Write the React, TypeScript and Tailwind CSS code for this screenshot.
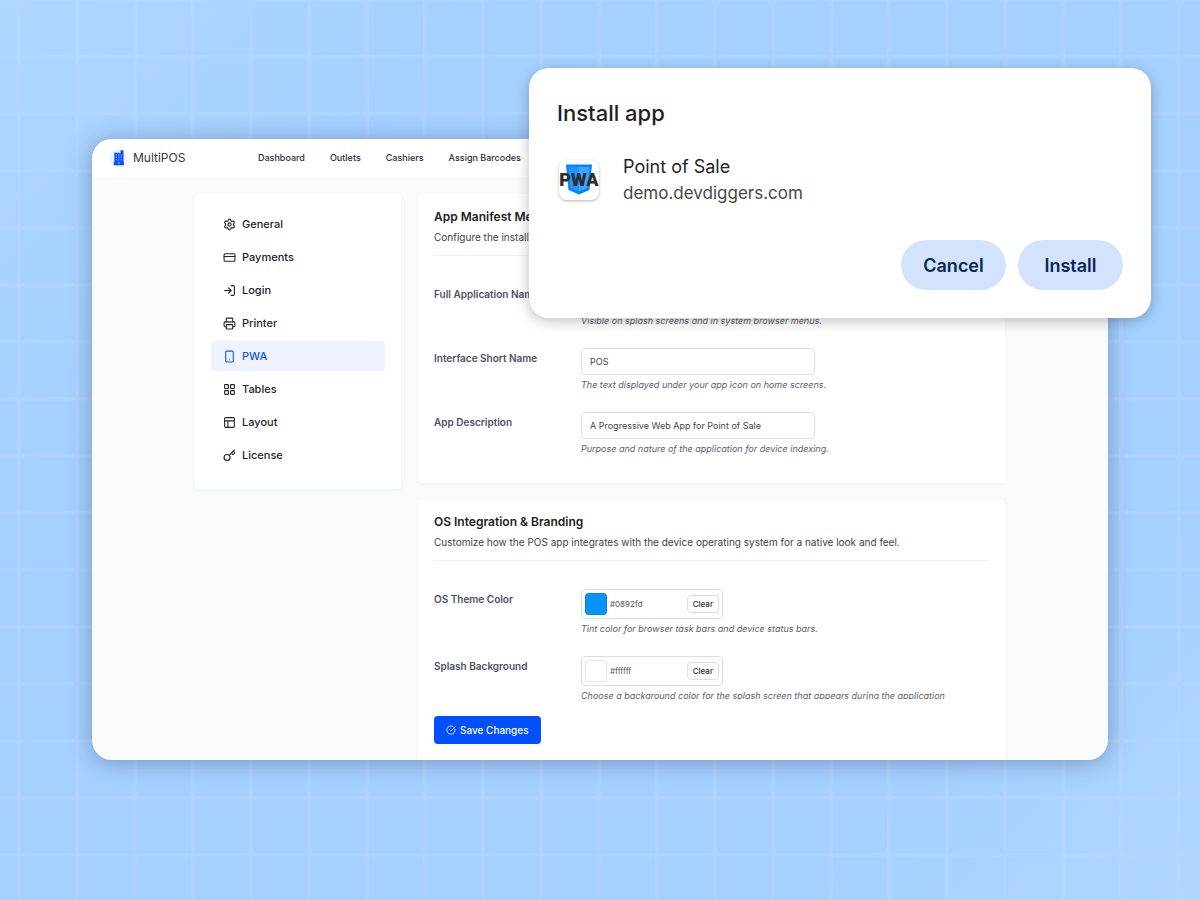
import { useState } from "react";
import {
    CircleCheckBig,
    CreditCard,
    Key,
    LayoutGrid,
    LogIn,
    PanelsTopLeft,
    Printer,
    Settings,
    Smartphone,
    type LucideIcon,
} from "lucide-react";

const navLinks = ["Dashboard", "Outlets", "Cashiers", "Assign Barcodes"];

const menu: { name: string; icon: LucideIcon }[] = [
    { name: "General", icon: Settings },
    { name: "Payments", icon: CreditCard },
    { name: "Login", icon: LogIn },
    { name: "Printer", icon: Printer },
    { name: "PWA", icon: Smartphone },
    { name: "Tables", icon: LayoutGrid },
    { name: "Layout", icon: PanelsTopLeft },
    { name: "License", icon: Key },
];

const manifestFields = [
    {
        id: "full-name",
        label: "Full Application Name",
        value: "Point of Sale",
        hint: "Visible on splash screens and in system browser menus.",
    },
    {
        id: "short-name",
        label: "Interface Short Name",
        value: "POS",
        hint: "The text displayed under your app icon on home screens.",
    },
    {
        id: "description",
        label: "App Description",
        value: "A Progressive Web App for Point of Sale",
        hint: "Purpose and nature of the application for device indexing.",
    },
];

const colorFields = [
    {
        id: "theme-color",
        label: "OS Theme Color",
        value: "#0892fd",
        hint: "Tint color for browser task bars and device status bars.",
    },
    {
        id: "splash-color",
        label: "Splash Background",
        value: "#ffffff",
        hint: "Choose a background color for the splash screen that appears during the application",
    },
];

function GridBackground() {
    return (
        <svg className="absolute inset-0 h-full w-full" aria-hidden="true">
            <defs>
                <pattern id="grid" x="17" y="55" width="58" height="57" patternUnits="userSpaceOnUse">
                    <path d="M2 0V57M0 1.5H58" stroke="#b9dcff" strokeOpacity="0.35" strokeWidth="4" />
                </pattern>
            </defs>
            <rect width="100%" height="100%" fill="url(#grid)" />
        </svg>
    );
}

function BrandLogo() {
    return (
        <svg className="h-5 w-5" viewBox="0 0 20 20" aria-hidden="true">
            <circle cx="9.500" cy="10" r="9" fill="#eef3ff" />
            <path d="M11.500 5V2.200h3V14h.5v3.200H4.800V14h.5V4.600z" fill="#0b4dff" />
            <path
                d="M6.600 6.200h1.400v1.400H6.600zM9 6.200h1.400v1.400H9zM11.400 6.200h1.400v1.400h-1.400zM6.600 8.700h1.400v1.400H6.600zM9 8.700h1.400v1.400H9zM11.400 8.700h1.400v1.400h-1.400zM6.600 11.200h1.400v1.200H6.600zM9 11.200h1.400v1.200H9zM11.400 11.200h1.400v1.200h-1.400z"
                fill="#7fa6ff"
            />
            <path d="M9.200 14.400h1.400v1.200H9.200z" fill="#fff" />
        </svg>
    );
}

function PwaLogo() {
    return (
        <svg
            className="h-10 w-10 shrink-0 rounded-lg bg-white shadow-[0_1px_3px_rgba(0,0,0,0.3)]"
            viewBox="0 0 40 40"
            aria-hidden="true"
        >
            <path d="M7 4.500h26L30.500 30 20 34.500 9.500 30z" fill="#0a84f5" />
            <path d="M20 7h10.500l-2 21L20 31.500z" fill="#3aa6ff" />
            <path d="M9.500 7H20v24.500L11.500 28z" fill="#1f97ff" />
            <text x="20" y="26" textAnchor="middle" className="fill-[#2d2d2d] font-['Roboto'] text-[18px] font-black">
                PWA
            </text>
        </svg>
    );
}

function CardHeading({ title, text }: { title: string; text: string }) {
    return (
        <div className="border-b border-[#f0f1f3] pb-[10px]">
            <h2 className="text-[12px] leading-4 font-semibold text-[#1c1d20]">{title}</h2>
            <p className="mt-1 text-[10px] leading-4 text-[#3c3f44]">{text}</p>
        </div>
    );
}

function ColorRow({ id, label, value, hint }: (typeof colorFields)[number]) {
    const [color, setColor] = useState(value);
    return (
        <div className="flex">
            <label htmlFor={id} className="w-[147px] shrink-0 pt-[2px] text-[10px] leading-4 font-semibold text-[#4a5168]">
                {label}
            </label>
            <div className="min-w-0">
                <div className="flex h-[30px] w-[142px] items-center rounded-[4px] border border-[#dcdee2] px-[3px]">
                    <span
                        className="h-[22px] w-[22px] shrink-0 rounded-[4px] border border-black/10"
                        style={{ backgroundColor: color }}
                    />
                    <input
                        id={id}
                        value={color}
                        onChange={(e) => setColor(e.target.value)}
                        className="ml-[3px] w-0 flex-1 text-[8px] text-[#50545b] outline-none"
                    />
                    <button
                        type="button"
                        onClick={() => setColor("")}
                        className="h-[18px] rounded-[4px] border border-[#dcdee2] px-[5px] text-[8px] leading-4 font-medium text-[#2c2e33]"
                    >
                        Clear
                    </button>
                </div>
                <p className="mt-[3px] text-[9px] leading-[14px] whitespace-nowrap text-[#5a5e66] italic">{hint}</p>
            </div>
        </div>
    );
}

function InstallDialog() {
    return (
        <div
            role="dialog"
            aria-labelledby="install-title"
            className="absolute top-[68px] right-[49px] w-[622px] rounded-[20px] bg-white px-7 pt-[29px] pb-7 shadow-[0_3px_14px_rgba(0,0,0,0.25)]"
        >
            <h2 id="install-title" className="text-[22px] leading-8 font-medium text-[#1f1f1f]">
                Install app
            </h2>
            <div className="mt-[25px] flex items-center gap-6 pl-[2px]">
                <PwaLogo />
                <div className="leading-[26px]">
                    <p className="text-[18px] text-[#1f1f1f]">Point of Sale</p>
                    <p className="text-[17px] text-[#474747]">demo.devdiggers.com</p>
                </div>
            </div>
            <div className="mt-[34px] flex justify-end gap-3 text-[18px] font-semibold text-[#0b2653]">
                <button type="button" className="h-[50px] w-[105px] rounded-full bg-[#d3e3fd]">
                    Cancel
                </button>
                <button type="button" className="h-[50px] w-[105px] rounded-full bg-[#d3e3fd]">
                    Install
                </button>
            </div>
        </div>
    );
}

export default function App() {
    return (
        <div className="relative min-h-screen bg-[#a5d0ff] bg-[linear-gradient(135deg,#aed6ff_0%,#a5d0ff_25%,#a5d0ff_80%,#b0d6ff_100%)] px-[92px] pt-[139px] pb-[140px] font-['Inter',sans-serif]">
            <GridBackground />

            <div className="relative overflow-hidden rounded-[20px] bg-[#f9fafc] shadow-[0_2px_22px_rgba(70,90,130,0.5)]">
                <header className="flex h-[38px] items-center bg-white pl-[17px]">
                    <a href="#" className="flex w-[149px] items-center gap-1 text-[12px] text-[#35373c]">
                        <BrandLogo />
                        MultiPOS
                    </a>
                    <nav className="flex gap-[25px] text-[9px] font-medium text-[#2b2d31]">
                        {navLinks.map((link) => (
                            <a key={link} href="#">
                                {link}
                            </a>
                        ))}
                    </nav>
                </header>

                <div className="mx-auto flex max-w-[810px] items-start gap-[17px] pt-[17px]">
                    <aside className="w-[206px] shrink-0 rounded-[4px] bg-white px-4 pt-[15px] pb-[19px] shadow-[0_1px_4px_rgba(30,50,90,0.04)]">
                        <nav className="flex flex-col gap-[3px]">
                            {menu.map(({ name, icon: Icon }) => (
                                <a
                                    key={name}
                                    href="#"
                                    className={`flex h-[30px] items-center gap-[6px] rounded-[4px] px-3 text-[11px] font-medium ${
                                        name === "PWA" ? "bg-[#eff3ff] text-[#0b55ff]" : "text-[#222427]"
                                    }`}
                                >
                                    <Icon className="h-[13px] w-[13px]" strokeWidth={2} />
                                    {name}
                                </a>
                            ))}
                        </nav>
                    </aside>

                    <main className="flex min-w-0 flex-1 flex-col gap-4">
                        <section className="rounded-[4px] bg-white px-4 pt-[15px] pb-[27px] shadow-[0_1px_4px_rgba(30,50,90,0.04)]">
                            <CardHeading
                                title="App Manifest Metadata"
                                text="Configure the installation details of the POS app."
                            />
                            <div className="mt-7 flex flex-col gap-5">
                                {manifestFields.map((field) => (
                                    <div key={field.id} className="flex">
                                        <label
                                            htmlFor={field.id}
                                            className="w-[147px] shrink-0 pt-[2px] text-[10px] leading-4 font-semibold text-[#4a5168]"
                                        >
                                            {field.label}
                                        </label>
                                        <div className="min-w-0">
                                            <input
                                                id={field.id}
                                                defaultValue={field.value}
                                                className="block h-[27px] w-[234px] rounded-[4px] border border-[#dcdee2] px-2 text-[9px] text-[#43464c] outline-none"
                                            />
                                            <p className="mt-[3px] text-[9px] leading-[14px] whitespace-nowrap text-[#5a5e66] italic">
                                                {field.hint}
                                            </p>
                                        </div>
                                    </div>
                                ))}
                            </div>
                        </section>

                        <section className="rounded-t-[4px] bg-white px-4 pt-[15px] pb-4 shadow-[0_1px_4px_rgba(30,50,90,0.04)]">
                            <CardHeading
                                title="OS Integration & Branding"
                                text="Customize how the POS app integrates with the device operating system for a native look and feel."
                            />
                            <div className="mt-7 flex h-[110px] flex-col gap-5 overflow-hidden">
                                {colorFields.map((field) => (
                                    <ColorRow key={field.id} {...field} />
                                ))}
                            </div>
                            <button
                                type="button"
                                className="mt-[17px] flex h-7 items-center gap-1 rounded-[4px] bg-[#0050ff] px-3 text-[10px] font-medium text-white"
                            >
                                <CircleCheckBig className="h-[10px] w-[10px]" strokeWidth={2} />
                                Save Changes
                            </button>
                        </section>
                    </main>
                </div>
            </div>

            <InstallDialog />
        </div>
    );
}
